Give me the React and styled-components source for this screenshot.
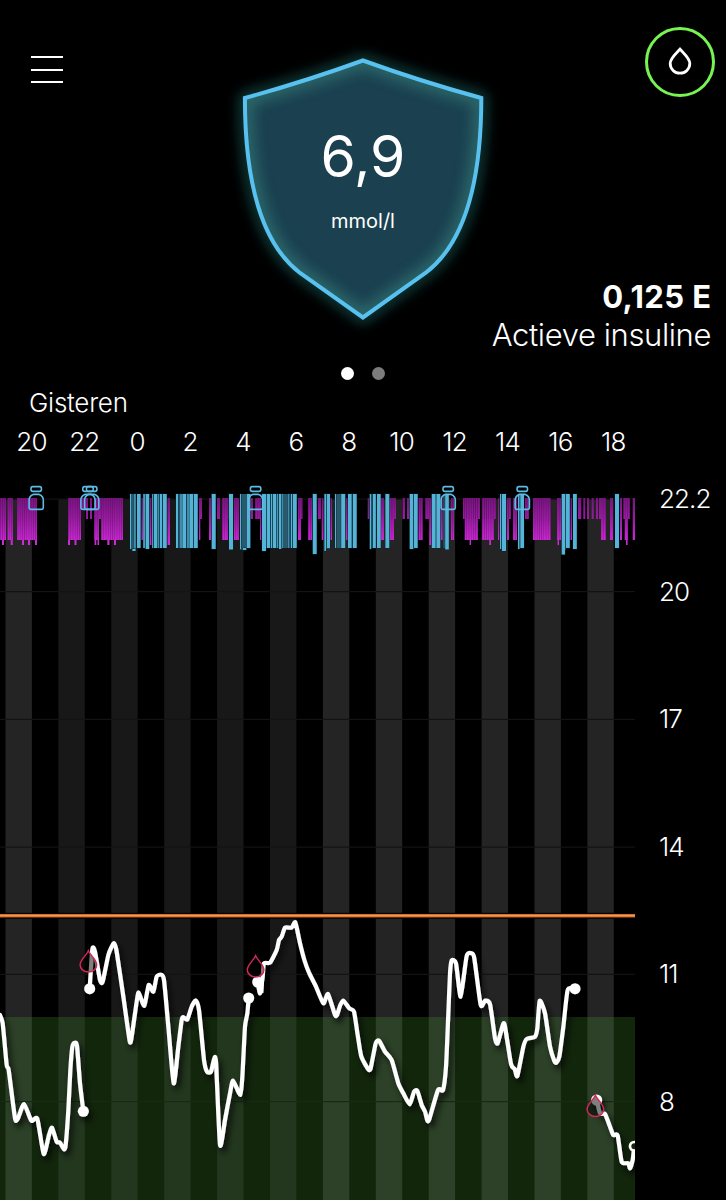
import React from 'react';
import styled, { createGlobalStyle } from 'styled-components';

const hours = ['20', '22', '0', '2', '4', '6', '8', '10', '12', '14', '16', '18'];

const levels = [
  { label: '22.2', gap: 0 },
  { label: '20', gap: 55 },
  { label: '17', gap: 89 },
  { label: '14', gap: 90 },
  { label: '11', gap: 89 },
  { label: '8', gap: 90 },
];

const gridLines = [499, 591.5, 719.3, 847, 974.3, 1101.5];

// Hour bands, the night is a bit darker than the day
const bands = [5.5, 58.4, 111.3, 164.2, 217.1, 270, 322.9, 375.8, 428.7, 481.6, 534.5, 587.4].map((x, i) => ({
  x,
  night: i > 0 && i < 6,
}));

// Basal deliveries: [left, right, bottom]
const basal = [
  [0, 6, 540], [2, 4, 545], [7.5, 12.7, 540], [10.7, 12.7, 545], [17, 37, 540], [22, 24, 545], [28, 30, 545],
  [35, 37, 545], [68, 81, 540], [68, 70, 545], [74.5, 76.5, 545], [81, 86, 510], [86, 88, 519], [90, 92, 519],
  [94.3, 99, 540], [94.6, 96.3, 545], [97.5, 99, 545], [99, 101, 519], [101, 123, 540], [107.3, 109.5, 545], [114, 116, 545],
  [141.5, 143, 540], [149.8, 151.5, 545], [167.5, 170, 545], [199, 200.3, 540], [199, 202, 519],
  [209, 211, 540], [217, 220, 519], [222, 228, 540], [228.5, 229.5, 519], [234, 239, 540], [250.5, 253, 519], [255, 261, 519],
  [260, 261.3, 540], [298, 301, 540], [298, 302.5, 519], [308, 312, 540], [317.8, 321, 519], [321.7, 323.3, 540],
  [330.3, 332, 540], [346, 347.6, 540], [367.7, 369.3, 519], [381, 384, 540], [390, 394, 540], [390, 396, 519],
  [402.5, 405, 519], [407, 409, 519], [418.5, 422.7, 540], [425.3, 431, 519], [429.3, 431, 545],
  [441, 442.6, 540], [451, 452.6, 540], [452.6, 454, 540], [463, 480, 519], [464.7, 478, 540], [469.6, 471, 545],
  [482, 496, 519], [482, 494, 540], [489.3, 491, 545], [498, 499.3, 540], [507, 511, 519], [507, 509, 540],
  [513, 517, 540], [525, 529, 519], [533, 550.7, 540], [557, 561, 540], [557.6, 559, 545], [570.5, 572, 540],
  [578, 581.3, 519], [583.3, 585.3, 519], [587, 589, 519], [591.7, 593.7, 519], [596, 598, 519], [601, 606, 540],
  [599, 601, 519], [610, 613, 540], [620, 622, 540], [623.3, 630, 519], [624.7, 627.7, 540], [626, 627.6, 545], [632.7, 635, 540],
];

// Faded automatic boluses that sit behind the bright ones
const faded = [
  [130, 136, 549], [143.3, 149, 548], [152, 167, 548], [176, 198, 548], [240, 247, 550], [266, 297, 548],
  [325, 330, 549], [335, 341, 548], [370, 376, 548], [443.3, 445.3, 548], [500, 502, 549], [518, 520, 549],
  [562, 566, 550], [250, 251, 512],
];

const bolus = [
  [130, 131.3, 549], [134.3, 135.6, 549], [132.3, 135.6, 551, 549], [137, 140.6, 548], [143.3, 144.8, 548], [145.7, 149.2, 549],
  [152.2, 153.2, 548], [154, 157.4, 548], [158.3, 159.3, 548], [160, 162, 548], [163, 166.7, 548], [176, 178, 548],
  [180.3, 181.7, 548], [182.4, 186, 548], [187.3, 188.7, 548], [189.4, 193.2, 548], [194, 197.7, 548], [211.7, 215.7, 549],
  [229, 233, 549.5], [240, 241, 549], [243, 246, 550, 548], [246.7, 250.3, 548], [262, 266, 551], [266.8, 270.2, 548],
  [271, 272.2, 548], [272.9, 276.3, 548], [277.2, 278.2, 548], [279, 281.3, 549], [282.3, 283.3, 548], [288.3, 289.3, 548],
  [291, 292.3, 548], [293, 296.7, 548], [312.8, 316.7, 554], [324.4, 326, 551], [326.8, 330, 548], [335, 336, 548],
  [341.2, 345.2, 548], [348, 351.7, 548], [352.8, 356.7, 548], [369.8, 371.2, 549], [373, 375.8, 548],
  [377, 380.7, 548], [385.4, 389.3, 548], [409.7, 413.4, 549], [414, 417.7, 548], [431.8, 435.6, 548],
  [436.4, 440.3, 548], [445.2, 448.8, 549.5], [500, 501.3, 549], [502, 506, 551], [518, 519.5, 549],
  [520.3, 524, 548], [561.7, 565, 554.5], [565.8, 569.8, 548], [573, 576.8, 549], [615, 619, 548],
];

const reservoirs = [36.2, 88, 91.7, 255.6, 448.2, 522.3];

// Sensor readings, in thirds of a pixel under y = 880
const readings = [
  '0,405 8,430 20,555 26,570 45,715 54,715 72,672 94,722 112,716 131,822 147,765 156,743 170,785 180,788 192,808 197,795 205,690 211,570 217,500 224,488 231,497 240,610 250,694',
  '269,326 277,207 285,215 300,300 308,305 325,225 335,200 342,190 350,215 370,350 389,483 395,470 413,345 418,342 433,377 446,315 460,335 470,290 483,284 492,300 505,440 521,610 535,500 545,420 549,411 562,418 575,380 587,361 597,390 612,540 621,575 633,575 642,538 648,545 660,795 675,720 690,640 699,602 721,645 727,590 735,440 742,400 746,354',
  '773,306 780,340 788,290 792,250 810,248 830,210 837,180 845,170 855,143 875,143 886,127 900,190 913,240 927,278 948,320 970,370 984,342 1005,405 1011,405 1021,375 1030,362 1048,385 1062,395 1073,465 1084,530 1105,568 1112,565 1127,490 1137,482 1155,515 1175,540 1195,610 1210,640 1229,673 1242,635 1252,632 1265,675 1275,695 1282,722 1288,717 1314,630 1329,630 1338,560 1345,400 1350,280 1355,241 1368,250 1382,350 1400,228 1415,220 1423,235 1442,375 1455,362 1470,372 1485,475 1493,490 1507,440 1514,434 1533,552 1544,567 1552,588 1570,500 1580,477 1605,470 1612,445 1619,362 1635,400 1650,500 1663,543 1669,548 1678,530 1690,440 1703,330 1725,326',
  '1790,658 1800,700 1815,702 1830,740 1840,765 1853,766 1865,845 1885,850 1890,865 1898,840 1901,815',
];

const endDots = [[250, 694], [269, 326], [746, 354], [773, 306], [1725, 326], [1790, 660]];
const calibrations = [[88.4, 963], [255.6, 968], [595.4, 1107.5]];

// Rounds the readings off a little so the line has no hard corners
const toPath = (text) => {
  const points = text.split(' ').map((pair) => pair.split(',').map(Number));
  return points.reduce((path, [x, y], i) => {
    if (i === 0) return `M${x} ${y}`;
    const before = points[Math.max(i - 2, 0)];
    const from = points[i - 1];
    const after = points[Math.min(i + 1, points.length - 1)];
    const k = 0.1;
    return `${path}C${from[0] + (x - before[0]) * k} ${from[1] + (y - before[1]) * k} ${x - (after[0] - from[0]) * k} ${y - (after[1] - from[1]) * k} ${x} ${y}`;
  }, '');
};

const Chart = () => (
  <ChartSvg viewBox="0 480 635 720">
    <defs>
      <linearGradient id="basal" gradientUnits="userSpaceOnUse" x1="0" y1="498" x2="0" y2="545">
        <stop offset="0" stopColor="#76157c" />
        <stop offset="0.45" stopColor="#9a1ca2" />
        <stop offset="1" stopColor="#d42bdc" />
      </linearGradient>
      <pattern id="pulses" width="2.2" height="60" patternUnits="userSpaceOnUse">
        <rect width="0.7" height="60" fill="#4a0a52" opacity="0.4" />
      </pattern>
      <filter id="shadow" x="-10%" y="-10%" width="120%" height="130%">
        <feDropShadow dx="3" dy="4.5" stdDeviation="3.4" floodColor="#000" floodOpacity="0.8" />
      </filter>
    </defs>

    {bands.map((band) => (
      <rect key={band.x} x={band.x} y="499" width="26.4" height="701" fill={band.night ? '#181818' : '#242424'} />
    ))}
    <rect x="0" y="1017" width="635" height="183" fill="#12260c" />
    {bands.map((band) => (
      <rect key={band.x} x={band.x} y="1017" width="26.4" height="183" fill={band.night ? '#22371e' : '#2c4127'} />
    ))}
    {gridLines.map((y) => (
      <rect key={y} x="0" y={y - 0.5} width="635" height="1.2" fill={y > 1017 ? '#152b12' : '#131313'} />
    ))}

    {basal.map(([left, right, bottom], i) => (
      <rect key={i} x={left} y="498" width={right - left} height={bottom - 498} fill="url(#basal)" />
    ))}
    {basal.filter(([left, right]) => right - left > 3.5).map(([left, right, bottom], i) => (
      <rect key={i} x={left} y="498" width={right - left} height={bottom - 498} fill="url(#pulses)" />
    ))}
    {faded.map(([left, right, bottom], i) => (
      <rect key={i} x={left} y="494" width={right - left} height={bottom - 494} fill="#28596d" />
    ))}
    {bolus.map(([left, right, bottom, top = 494], i) => (
      <rect key={i} x={left} y={top} width={right - left} height={bottom - top} fill="#55b3d8" stroke="#0c2731" strokeWidth="0.8" paintOrder="stroke" />
    ))}
    {reservoirs.map((x) => (
      <g key={x} transform={`translate(${x} 0)`} fill="none" stroke="#5cbce6" strokeWidth="1.6">
        <rect x="-5.2" y="486.6" width="10.4" height="4.8" rx="1.8" />
        <path d="M-3 494.4H3C5.5 495.4 7.1 497 7.1 499.8V507.4Q7.1 509.4 5.1 509.4H-5.1Q-7.1 509.4 -7.1 507.4V499.8C-7.1 497 -5.5 495.4 -3 494.4Z" />
      </g>
    ))}

    <rect x="0" y="912.8" width="635" height="6" fill="#080402" />
    <rect x="0" y="914" width="635" height="3.4" fill="#d96f25" />
    <rect x="0" y="915" width="635" height="1.3" fill="#ea9a5e" />

    <g filter="url(#shadow)">
      <g transform="translate(0 880) scale(0.33333)">
        {readings.map((points) => (
          <path key={points} d={toPath(points)} fill="none" stroke="#fff" strokeWidth="12.5" strokeLinejoin="round" strokeLinecap="round" />
        ))}
        <path d="M773 306L793 285L790 338L780 343Z" fill="#fff" />
        {endDots.map(([x, y]) => (
          <circle key={x} cx={x} cy={y} r="16.5" fill="#fff" />
        ))}
        <circle cx="1903" cy="799" r="13" fill="#12260c" stroke="#fff" strokeWidth="8" />
      </g>
    </g>
    {calibrations.map(([x, y]) => (
      <path
        key={x}
        transform={`translate(${x} ${y})`}
        d="M0 -12.3C-2 -7.5 -8.3 -3.2 -8.3 1.8C-8.3 5.8 -4.8 9 0 9C4.8 9 8.3 5.8 8.3 1.8C8.3 -3.2 2 -7.5 0 -12.3Z"
        fill="rgba(0, 0, 0, 0.5)"
        stroke="#cf2a55"
        strokeWidth="1.5"
      />
    ))}
  </ChartSvg>
);

const App = () => {
  return (
    <Screen>
      <GlobalStyle />
      <Header>
        <MenuButton aria-label="Menu">
          <MenuLine />
          <MenuLine />
          <MenuLine />
        </MenuButton>

        <Shield>
          <ShieldSvg viewBox="238 30 250 310">
            <defs>
              <clipPath id="inside">
                <path d={shieldPath} />
              </clipPath>
              <filter id="glow" x="-20%" y="-20%" width="140%" height="140%">
                <feGaussianBlur stdDeviation="7" />
              </filter>
            </defs>
            <path d={shieldPath} fill="none" stroke="#1d6763" strokeWidth="10" opacity="0.75" filter="url(#glow)" />
            <path d={shieldPath} fill="#1b4150" />
            <g clipPath="url(#inside)">
              <path d={shieldPath} fill="none" stroke="#2f6f70" strokeWidth="15" opacity="0.9" filter="url(#glow)" />
            </g>
            <path d={shieldPath} fill="none" stroke="#58c1f0" strokeWidth="4" />
          </ShieldSvg>
          <Reading>
            <Value>6,9</Value>
            <Unit>mmol/l</Unit>
          </Reading>
        </Shield>

        <Side>
          <DropButton aria-label="Bolus">
            <svg width="26" height="30" viewBox="0 0 26 30">
              <path d="M13 3.2C9.5 7.2 3.2 12 3.2 17.6A9.8 9.6 0 0 0 22.8 17.6C22.8 12 16.5 7.2 13 3.2Z" fill="none" stroke="#fff" strokeWidth="2.8" />
            </svg>
          </DropButton>
          <Insulin>
            <Amount>0,125 E</Amount>
            <Caption>Actieve insuline</Caption>
          </Insulin>
        </Side>
      </Header>

      <Pager>
        <Dot $active />
        <Dot />
      </Pager>

      <Day>Gisteren</Day>
      <Hours>
        {hours.map((hour) => (
          <span key={hour}>{hour}</span>
        ))}
      </Hours>

      <Graph>
        <Chart />
        <Levels>
          {levels.map((level) => (
            <Level key={level.label} $gap={level.gap}>{level.label}</Level>
          ))}
        </Levels>
      </Graph>
    </Screen>
  );
};

const shieldPath =
  'M362.9 60.5Q421 81.5 481.3 98C481.3 172 469 240 425.5 273Q406 287 362.9 317.5Q320 287 300 273C257 240 244.9 172 244.9 98Q305 81.5 362.9 60.5Z';

// Styled components
const GlobalStyle = createGlobalStyle`
  body {
    margin: 0;
    background-color: #000;
  }
`;

const Screen = styled.div`
  width: 726px;
  height: 1200px;
  overflow: hidden;
  background-color: #000;
  color: #fff;
  font-family: Inter, "Liberation Sans", sans-serif;
  font-weight: 300;
`;

const Header = styled.header`
  display: grid;
  grid-template-columns: 238px 250px 238px;
  height: 360px;
`;

const MenuButton = styled.button`
  display: flex;
  flex-direction: column;
  gap: 10.5px;
  align-self: start;
  width: 32px;
  margin: 56px 0 0 31px;
  padding: 0;
  border: none;
  background: none;
`;

const MenuLine = styled.span`
  height: 2px;
  background-color: #fff;
`;

const Shield = styled.div`
  display: grid;
  padding-top: 30px;
  align-content: start;

  > * {
    grid-area: 1 / 1;
  }
`;

const ShieldSvg = styled.svg`
  width: 250px;
  height: 310px;
  overflow: visible;
`;

const Reading = styled.div`
  display: flex;
  flex-direction: column;
  align-items: center;
  padding-top: 97px;
`;

const Value = styled.div`
  font-size: 57px;
  line-height: 60px;
  font-weight: 400;
  letter-spacing: 0;
`;

const Unit = styled.div`
  margin-top: 22px;
  font-size: 20px;
  line-height: 24px;
  font-weight: 400;
`;

const Side = styled.div`
  display: flex;
  flex-direction: column;
  align-items: flex-end;
`;

const DropButton = styled.button`
  box-sizing: border-box;
  display: flex;
  align-items: center;
  justify-content: center;
  width: 70px;
  height: 70px;
  margin: 27px 11px 0 0;
  padding: 0 0 2px;
  border: 3px solid #78f452;
  border-radius: 50%;
  background: none;
`;

const Insulin = styled.div`
  margin: 181px 15px 0 0;
  text-align: right;
  white-space: nowrap;
  font-size: 31px;
  line-height: 38px;
`;

const Amount = styled.div`
  font-weight: 700;
  letter-spacing: 0.4px;
  margin-right: -0.4px;
`;

const Caption = styled.div`
  font-weight: 300;
  letter-spacing: -0.4px;
`;

const Pager = styled.div`
  display: flex;
  justify-content: center;
  gap: 18px;
  height: 26px;
  align-items: center;
`;

const Dot = styled.span`
  width: 13px;
  height: 13px;
  border-radius: 50%;
  background-color: ${({ $active }) => ($active ? '#fff' : '#7c7c7c')};
`;

const Day = styled.div`
  margin: 2px 0 0 29px;
  font-size: 26px;
  line-height: 30px;
  letter-spacing: -0.25px;
`;

const Hours = styled.div`
  display: grid;
  grid-template-columns: repeat(12, 52.9px);
  margin: 9px 0 0 5px;
  font-size: 26px;
  line-height: 30px;
  letter-spacing: -0.8px;
  text-align: center;
`;

const Graph = styled.div`
  display: flex;
  margin-top: 23px;
`;

const ChartSvg = styled.svg`
  width: 635px;
  height: 720px;
`;

const Levels = styled.div`
  display: flex;
  flex-direction: column;
  margin-left: 24px;
  font-size: 26px;
  line-height: 38px;
  letter-spacing: -0.9px;
`;

const Level = styled.span`
  margin-top: ${({ $gap }) => $gap}px;
`;

export default App;
